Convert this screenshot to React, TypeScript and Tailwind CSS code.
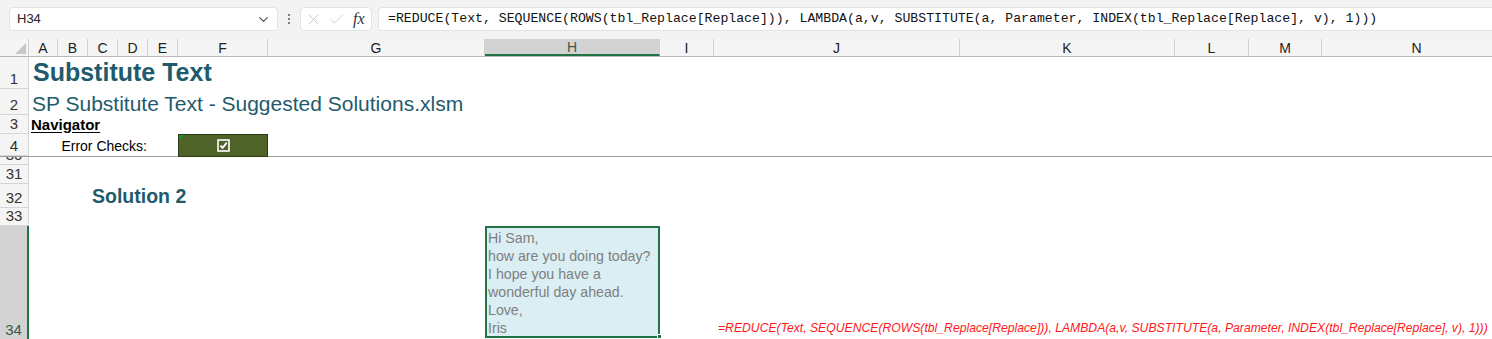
import { ChevronDown, Check, X } from 'lucide-react'

const cols = [
  { key: 'A', w: 'w-[29px]' },
  { key: 'B', w: 'w-[30px]' },
  { key: 'C', w: 'w-[30px]' },
  { key: 'D', w: 'w-[30px]' },
  { key: 'E', w: 'w-[30px]' },
  { key: 'F', w: 'w-[90px]' },
  { key: 'G', w: 'w-[217px]' },
  { key: 'H', w: 'w-[175px]' },
  { key: 'I', w: 'w-[54px]' },
  { key: 'J', w: 'w-[246px]' },
  { key: 'K', w: 'w-[215px]' },
  { key: 'L', w: 'w-[74px]' },
  { key: 'M', w: 'w-[73px]' },
  { key: 'N', w: 'w-[190px]' },
]

const sheetCols =
  'grid grid-cols-[29px_30px_30px_30px_30px_90px_217px_175px_54px_246px_215px_74px_73px_170px]'

const formula =
  '=REDUCE(Text, SEQUENCE(ROWS(tbl_Replace[Replace])), LAMBDA(a,v, SUBSTITUTE(a, Parameter, INDEX(tbl_Replace[Replace], v), 1)))'

const letter = ['Hi Sam,', 'how are you doing today?', 'I hope you have a', 'wonderful day ahead.', 'Love,', 'Iris']

function RowHead({
  n,
  h,
  selected = false,
}: {
  n: string
  h: string
  selected?: boolean
}) {
  return (
    <div
      className={
        selected
          ? `${h} flex w-[29px] shrink-0 items-end justify-center overflow-hidden border-r-2 border-[#217346] bg-[#d3d3d3] pb-[1px] text-[15px] leading-[17px] text-[#3b5a4b]`
          : `${h} flex w-[29px] shrink-0 items-end justify-center overflow-hidden border-b border-r border-[#d5d5d5] bg-[#f5f5f5] pb-[1px] text-[15px] leading-[17px] text-[#333]`
      }
    >
      {n}
    </div>
  )
}

function Row({
  n,
  h,
  selected,
  children,
}: {
  n: string
  h: string
  selected?: boolean
  children?: React.ReactNode
}) {
  return (
    <div className={`flex ${h}`}>
      <RowHead n={n} h={h} selected={selected} />
      <div className={`${sheetCols} ${h} w-[1463px] shrink-0`}>{children}</div>
    </div>
  )
}

export default function App() {
  return (
    <div className="h-[339px] w-[1492px] overflow-hidden bg-white font-['Liberation_Sans',Arial,sans-serif] text-black">
      {/* formula bar */}
      <div className="flex h-[39px] items-center bg-[#f3f3f3] pb-[1px]">
        <div className="ml-[9px] flex h-[24px] w-[269px] items-center justify-between rounded-[4px] border border-[#e3e3e3] bg-white pl-[7px] pr-[6px] text-[13px] text-[#222]">
          <span>H34</span>
          <ChevronDown className="h-[15px] w-[15px] text-[#444]" strokeWidth={1.8} />
        </div>
        <div className="ml-[6px] flex w-[10px] flex-col items-center gap-[2px]">
          <span className="h-[2px] w-[2px] rounded-full bg-[#555]" />
          <span className="h-[2px] w-[2px] rounded-full bg-[#555]" />
          <span className="h-[2px] w-[2px] rounded-full bg-[#555]" />
        </div>
        <div className="ml-[6px] flex h-[24px] w-[72px] items-center gap-[6px] rounded-[4px] border border-[#e3e3e3] bg-white pl-[4px]">
          <X className="h-[17px] w-[17px] text-[#c4c4c4]" strokeWidth={1.2} />
          <Check className="h-[17px] w-[17px] text-[#c4c4c4]" strokeWidth={1.2} />
          <span className="ml-[2px] font-['Liberation_Serif',serif] text-[16px] italic text-[#333]">
            fx
          </span>
        </div>
        <div className="ml-[6px] flex h-[24px] flex-1 items-center rounded-l-[4px] border border-r-0 border-[#e3e3e3] bg-white pl-[9px] font-['Liberation_Mono',monospace] text-[13.2px] text-[#111]">
          {formula}
        </div>
      </div>

      {/* column headers */}
      <div className="flex h-[18px] border-b border-[#b8b8b8] bg-[#f5f5f5]">
        <div className="flex w-[29px] shrink-0 items-end justify-end border-r border-[#d0d0d0] pb-[2px] pr-[2px]">
          <svg width="11" height="11" viewBox="0 0 11 11">
            <polygon points="11,0 11,11 0,11" fill="#c8c8c8" />
          </svg>
        </div>
        {cols.map((c) =>
          c.key === 'H' ? (
            <div
              key={c.key}
              className={`${c.w} flex shrink-0 items-center justify-center border-b-2 border-r border-b-[#217346] border-r-[#d0d0d0] bg-[#d3d3d3] text-[14px] leading-none text-[#3b5a4b]`}
            >
              {c.key}
            </div>
          ) : (
            <div
              key={c.key}
              className={`${c.w} flex shrink-0 items-center justify-center border-r border-[#d0d0d0] text-[14px] leading-none text-[#222]`}
            >
              {c.key}
            </div>
          ),
        )}
      </div>

      {/* frozen rows */}
      <Row n="1" h="h-[32px]">
        <div className="col-span-8 flex items-center whitespace-nowrap pb-[1px] pl-[4px] text-[25px] font-bold leading-none text-[#1f5b6c]">
          Substitute Text
        </div>
      </Row>
      <Row n="2" h="h-[26px]">
        <div className="col-span-8 flex items-center whitespace-nowrap pt-[3px] pl-[3px] text-[21px] leading-none text-[#1f5b6c]">
          SP Substitute Text - Suggested Solutions.xlsm
        </div>
      </Row>
      <Row n="3" h="h-[19px]">
        <div className="col-span-4 flex items-center pb-[1px] pl-[2px] text-[15px] font-bold leading-none underline underline-offset-2">
          Navigator
        </div>
      </Row>
      <Row n="4" h="h-[22px]">
        <div className="col-start-2 col-span-3 flex items-center justify-end pr-[1px] pt-[2px] text-[14px]">
          Error Checks:
        </div>
        <div className="relative col-start-6 flex items-center justify-center border border-[#2d3a16] bg-[#4f6228]">
          <span className="absolute left-0 top-0 h-0 w-0 border-l-[5px] border-t-[5px] border-l-transparent border-t-[#0a9c2a] [transform:scaleX(-1)]" />
          <svg width="13" height="13" viewBox="0 0 13 13">
            <rect x="1" y="1" width="11" height="11" fill="none" stroke="#fff" strokeWidth="1.6" />
            <path d="M3.4 6.6 L5.6 8.9 L9.8 3.6" fill="none" stroke="#fff" strokeWidth="1.8" />
          </svg>
        </div>
      </Row>

      {/* frozen pane divider */}
      <div className="h-[1px] bg-[#9d9d9d]" />

      <Row n="30" h="h-[8px]" />
      <Row n="31" h="h-[19px]" />
      <Row n="32" h="h-[24px]">
        <div className="col-start-3 col-span-5 flex items-center whitespace-nowrap pt-[2px] pl-[4px] text-[19.5px] font-bold leading-none text-[#1f5b6c]">
          Solution 2
        </div>
      </Row>
      <Row n="33" h="h-[18px]" />
      <Row n="34" h="h-[113px]" selected>
        <div className="relative col-start-8 h-[112px] border-2 border-[#217346] bg-[#daeef3] pl-[1px] pt-[1px] text-[14.2px] leading-[18px] text-[#7f7f7f]">
          {letter.map((line) => (
            <div key={line}>{line}</div>
          ))}
          <span className="absolute -bottom-[3px] -right-[4px] h-[5px] w-[5px] border border-white bg-[#217346]" />
        </div>
        <div className="col-start-10 col-span-5 flex items-end whitespace-nowrap pb-[2px] pl-[4px] text-[12.2px] italic text-[#ff1a1a]">
          {formula}
        </div>
      </Row>
    </div>
  )
}
